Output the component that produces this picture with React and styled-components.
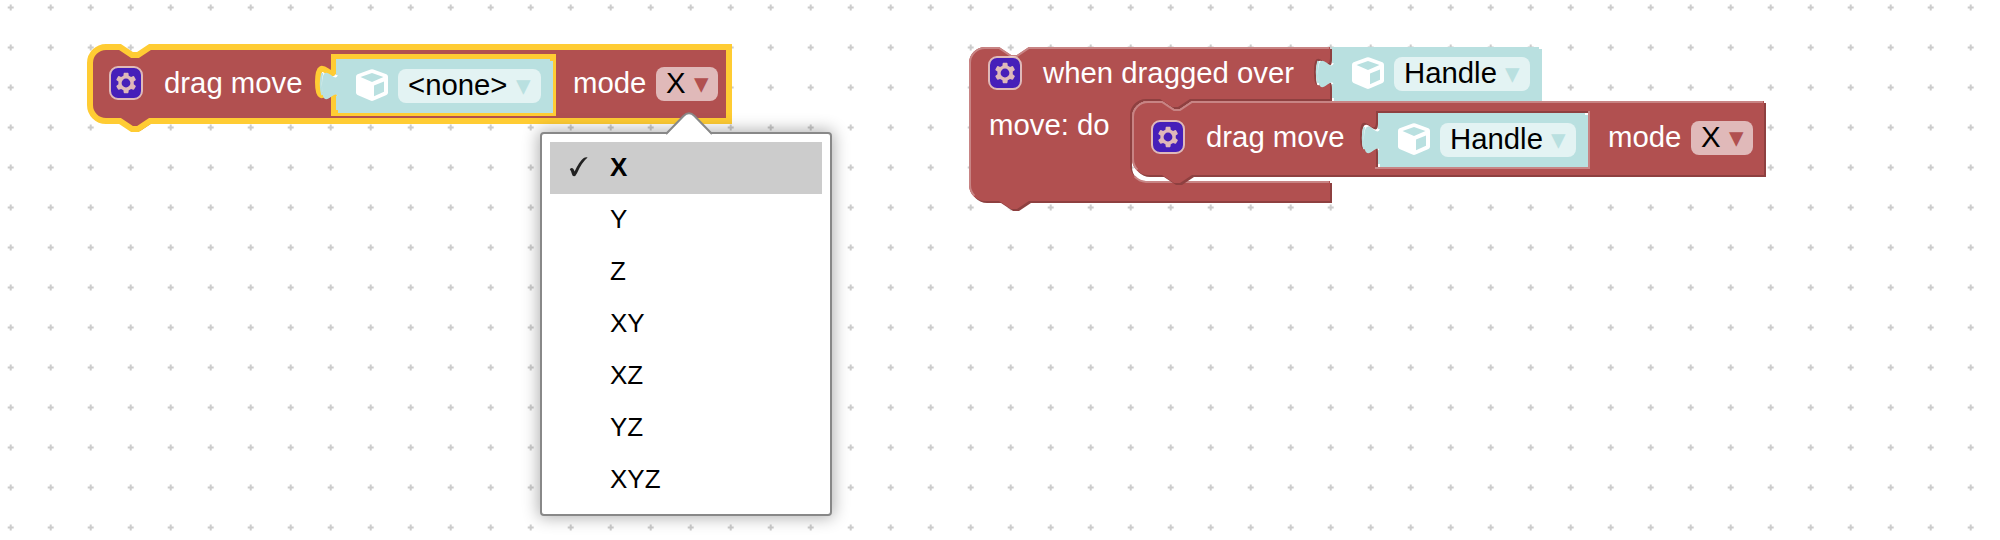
import React from 'react';
import styled, { createGlobalStyle } from 'styled-components';

const Global = createGlobalStyle`
  body { margin: 0; background: #fff; }
`;

const Workspace = styled.main`
  position: relative;
  width: 2000px;
  height: 540px;
  overflow: hidden;
  font-family: 'Liberation Sans', Arial, sans-serif;
`;

const Backdrop = styled.svg`
  display: block;
  width: 100%;
  height: 100%;
`;

/* Blocks and the menu sit freely on the canvas. */
const Block = styled.section`
  position: absolute;
  left: ${(p) => p.$x}px;
  top: ${(p) => p.$y}px;
  width: ${(p) => p.$w}px;
  height: ${(p) => p.$h}px;
`;

const Outline = styled.svg`
  position: absolute;
  left: 0;
  top: 0;
  width: 1px;
  height: 1px;
  overflow: visible;
`;

const Row = styled.div`
  position: relative;
  display: flex;
  align-items: flex-start;
  padding: ${(p) => p.$top}px 0 0 20px;
`;

const Label = styled.span`
  flex: none;
  width: ${(p) => p.$w}px;
  margin-left: ${(p) => p.$gap || 0}px;
  font-size: 29.333px;
  line-height: 32px;
  color: #fff;
  white-space: pre;
`;

const Field = styled.div`
  position: relative;
  flex: none;
  width: ${(p) => p.$w}px;
  height: 34px;
  margin-left: 10px;
  padding: 0 10px;
  box-sizing: border-box;
  border-radius: 8px;
  background: rgba(255, 255, 255, 0.6);
  font-size: 29.333px;
  line-height: 32px;
  color: #000;
  white-space: pre;
`;

const Arrow = styled.span`
  color: ${(p) => p.$color};
`;

const ValueBlock = styled.div`
  position: relative;
  display: flex;
  flex: none;
  width: ${(p) => p.$w}px;
  height: 54px;
  box-sizing: border-box;
  padding: 10px 0 0 20px;
  margin-top: ${(p) => p.$top}px;
`;

const GearSvg = styled.svg`
  position: relative;
  display: block;
  flex: none;
  width: 32px;
  height: 32px;
  overflow: visible;
  opacity: 0.6;
`;

const CubeSvg = styled.svg`
  position: relative;
  display: block;
  flex: none;
  width: 32px;
  height: 32px;
`;

const RED = '#b15050';
const RED_DARK = '#8e4040';
const RED_LIGHT = '#c88484';
const TEAL = '#b9e0e0';
const YELLOW = '#ffcc33';

const TAB_DOWN = 'c 0,10 -8,-8 -8,7.5 s 8,-2.5 8,7.5';
const TAB_UP = 'c 0,-10 -8,8 -8,-7.5 s 8,2.5 8,-7.5';
const NOTCH = 'l 6,4 3,0 6,-4';
const NOTCH_BACK = 'l -6,4 -3,0 -6,-4';

const Gear = () => (
  <GearSvg viewBox="0 0 16 16">
    <rect width="16" height="16" rx="4" fill="#00f" stroke="#fff" />
    <path
      fill="#fff"
      d="m4.203,7.296 0,1.368 -0.92,0.677 -0.11,0.41 0.9,1.559 0.41,0.11 1.043,-0.457 1.187,0.683 0.127,1.134 0.3,0.3 1.8,0 0.3,-0.299 0.127,-1.138 1.185,-0.682 1.046,0.458 0.409,-0.11 0.9,-1.559 -0.11,-0.41 -0.92,-0.677 0,-1.366 0.92,-0.677 0.11,-0.41 -0.9,-1.559 -0.409,-0.109 -1.046,0.458 -1.185,-0.682 -0.127,-1.138 -0.3,-0.299 -1.8,0 -0.3,0.3 -0.126,1.135 -1.187,0.682 -1.043,-0.457 -0.41,0.11 -0.899,1.559 0.108,0.409z"
    />
    <circle cx="8" cy="8" r="2.7" fill="#00f" stroke="#fff" />
  </GearSvg>
);

const Cube = () => (
  <CubeSvg viewBox="0 0 32 32">
    <path
      fill="#fff"
      fillRule="evenodd"
      d="M14.6 0.5 Q16 -0.2 17.4 0.5 L30.4 5.2 Q32 6 32 7.8 V23.4 Q32 25 30.5 25.9 L17.6 31.6 Q16 32.3 14.4 31.6 L1.5 25.9 Q0 25 0 23.4 V7.8 Q0 6 1.6 5.2 Z M16 4 L4.5 8.1 L16 12.9 L27.5 8.1 Z M18 16.6 V27.2 L28 22.8 V12.5 Z"
    />
  </CubeSvg>
);

/* Outline coordinates are in block units, two pixels each. */
const DragOutline = ({ w, hole, selected }) => {
  const path = `M 0,8 A 8,8 0 0,1 8,0 H 15 ${NOTCH} H ${w} V 37 H 30 ${NOTCH_BACK} H 8 A 8,8 0 0,1 0,29 Z
    M ${122 + hole},5 H 122 v 5 ${TAB_DOWN} V 33 H ${122 + hole} Z`;
  return (
    <Outline>
      <g transform="scale(2)">
        <path transform="translate(1,1)" d={path} fill={RED_DARK} fillRule="evenodd" />
        <path
          d={path}
          fill={RED}
          fillRule="evenodd"
          stroke={selected ? YELLOW : 'none'}
          strokeWidth="3"
        />
        {!selected && (
          <path
            fill="none"
            stroke={RED_LIGHT}
            strokeWidth="1"
            d={`M 2.7,34.3 A 7.5,7.5 0 0,1 0.5,29 V 8 A 7.5,7.5 0 0,1 8,0.5 H 15 ${NOTCH} H ${w - 0.5}
              M ${122.5 + hole},5 V 33.5 H 121.5 M 116.5,23.2 L 118,22.9`}
          />
        )}
      </g>
    </Outline>
  );
};

const WhenOutline = () => {
  const path = `M 0,8 A 8,8 0 0,1 8,0 H 15 ${NOTCH} H 180.5 v 5 ${TAB_DOWN} V 26 H 110.5 ${NOTCH_BACK} h -7
    a 8,8 0 0,0 -8,8 v 25 a 8,8 0 0,0 8,8 H 180.5 V 77 H 30 ${NOTCH_BACK} H 8 A 8,8 0 0,1 0,69 Z`;
  return (
    <Outline>
      <g transform="scale(2)">
        <path transform="translate(1,1)" d={path} fill={RED_DARK} />
        <path d={path} fill={RED} />
        <path
          fill="none"
          stroke={RED_LIGHT}
          strokeWidth="1"
          d={`M 2.7,74.3 A 7.5,7.5 0 0,1 0.5,69 V 8 A 7.5,7.5 0 0,1 8,0.5 H 15 ${NOTCH} H 180
            M 82.8,64.7 A 8.5,8.5 0 0,0 88.5,67.5 H 180 M 175,18.2 L 176.5,17.9`}
        />
      </g>
    </Outline>
  );
};

const ObjectValue = ({ name, w, fieldWidth, top }) => (
  <ValueBlock $w={w + 2} $top={top}>
    <Outline>
      <g transform="scale(2)">
        <path
          transform="translate(1,1)"
          fill={TEAL}
          d={`M 0,0 H ${w / 2} V 26 H 0 V 20 ${TAB_UP} Z`}
        />
        <path
          fill="none"
          stroke={TEAL}
          strokeWidth="1"
          d={`M 0.5,25.5 V 18.5 m -7.36,-0.5 q -1.52,-5.5 0,-11 m 7.36,1 V 0.5 H ${w / 2 - 0.5}`}
        />
      </g>
    </Outline>
    <Cube />
    <Field $w={fieldWidth}>
      {name} <Arrow $color={TEAL}>▾</Arrow>
    </Field>
  </ValueBlock>
);

const DragMove = ({ x, y, name, w, valueWidth, fieldWidth, selected }) => (
  <Block $x={x} $y={y} $w={w} $h={74}>
    <DragOutline w={w / 2} hole={(valueWidth + 4) / 2} selected={selected} />
    <Row $top={20}>
      <Gear />
      <Label $gap={22} $w={172}>drag move</Label>
      <ObjectValue name={name} w={valueWidth} fieldWidth={fieldWidth} top={-8} />
      <Label $gap={20} $w={73}>mode</Label>
      <Field $w={62}>
        X <Arrow $color={RED}>▾</Arrow>
      </Field>
    </Row>
  </Block>
);

const Menu = styled.div`
  position: absolute;
  left: 540px;
  top: 132px;
  width: 292px;
  height: 384px;
  box-sizing: border-box;
  padding: 8px;
  background: #fff;
  border: 2px solid #888;
  border-radius: 4px;
  box-shadow: 0 0 16px 2px rgba(0, 0, 0, 0.3);
`;

const Pointer = styled.svg`
  position: absolute;
  left: 123px;
  top: -22px;
  width: 48px;
  height: 24px;
`;

const Item = styled.div`
  display: flex;
  align-items: center;
  height: 52px;
  box-sizing: border-box;
  padding-bottom: 2px;
  font-size: 26px;
  line-height: 30px;
  color: #000;
  background: ${(p) => (p.$on ? '#ccc' : 'transparent')};
  font-weight: ${(p) => (p.$on ? 700 : 400)};
`;

const Mark = styled.div`
  width: 60px;
  padding-left: 19px;
  box-sizing: border-box;
  svg { display: block; }
`;

const MODES = ['X', 'Y', 'Z', 'XY', 'XZ', 'YZ', 'XYZ'];

export default function App() {
  return (
    <Workspace>
      <Global />
      <Backdrop>
        <defs>
          <pattern id="grid" width="40" height="40" patternUnits="userSpaceOnUse">
            <path d="M 7.7,7.5 H 13.7 M 10.7,4.5 V 10.5" stroke="#ccc" strokeWidth="2" />
          </pattern>
        </defs>
        <rect width="100%" height="100%" fill="url(#grid)" />
      </Backdrop>

      <DragMove x={90} y={47} w={639} name="<none>" valueWidth={215} fieldWidth={143} selected />

      <Block $x={969} $y={47} $w={363} $h={156}>
        <WhenOutline />
        <Row $top={10}>
          <Gear />
          <Label $gap={22} $w={289}>when dragged over</Label>
          <ObjectValue name="Handle" w={208} fieldWidth={136} top={-10} />
        </Row>
        <Row $top={8}>
          <Label>move: do</Label>
        </Row>
      </Block>

      <DragMove x={1132} y={101} w={632} name="Handle" valueWidth={208} fieldWidth={136} />

      <Menu>
        <Pointer viewBox="0 0 48 24">
          <path d="M1.5 24 V22.5 L19 4 Q24 -1.4 29 4 L46.5 22.5 V24 Z" fill="#fff" />
          <path d="M1 22 L18.5 4 Q24 -1.4 29.5 4 L47 22" fill="none" stroke="#888" strokeWidth="2" />
        </Pointer>
        {MODES.map((mode, i) => (
          <Item key={mode} $on={i === 0}>
            <Mark>
              {i === 0 && (
                <svg width="20" height="22" viewBox="0 0 20 22">
                  <path
                    d="M0.8 13.2 Q2.6 11.4 4 12.6 Q5 13.6 5.6 15.6 Q10 5.6 14.4 2.2 Q16 1.2 18.6 1.4 Q12.4 6.6 8 17.2 Q6.6 20.2 5 20.2 Q3.4 20.2 2.9 18 Q2.2 14.6 0.8 13.2 Z"
                    fill="#222"
                  />
                </svg>
              )}
            </Mark>
            {mode}
          </Item>
        ))}
      </Menu>
    </Workspace>
  );
}
